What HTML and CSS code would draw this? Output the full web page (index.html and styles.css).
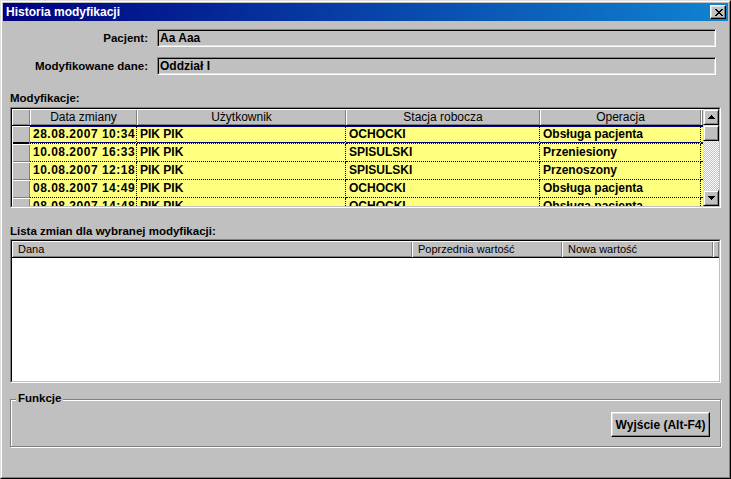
FILE: index.html
```html
<!DOCTYPE html>
<html lang="pl">
<head>
<meta charset="utf-8">
<title>Historia modyfikacji</title>
<link rel="stylesheet" href="styles.css">
</head>
<body>
<div class="window">
  <div class="frame">
    <div class="titlebar">
      <span class="title">Historia modyfikacji</span>
      <span class="close"><svg width="8" height="7" viewBox="0 0 8 7" shape-rendering="crispEdges"><path d="M0 0h2v1H0zM6 0h2v1H6zM1 1h2v1H1zM5 1h2v1H5zM2 2h4v1H2zM3 3h2v1H3zM2 4h4v1H2zM1 5h2v1H1zM5 5h2v1H5zM0 6h2v1H0zM6 6h2v1H6z" fill="#000"/></svg></span>
    </div>
    <div class="content">
      <div class="field"><span class="flabel">Pacjent:</span><div class="fbox">Aa Aaa</div></div>
      <div class="field"><span class="flabel">Modyfikowane dane:</span><div class="fbox">Oddział I</div></div>

      <div class="section-label">Modyfikacje:</div>
      <div class="sunken grid-wrap">
        <div class="sunken-in grid-in">
          <div class="grid">
            <div class="gh"></div><div class="gh">Data zmiany</div><div class="gh">Użytkownik</div><div class="gh">Stacja robocza</div><div class="gh">Operacja</div><div class="gh"></div>

            <div class="gi gi-sel"></div><div class="gc sel date">28.08.2007 10:34</div><div class="gc sel">PIK PIK</div><div class="gc sel">OCHOCKI</div><div class="gc sel">Obsługa pacjenta</div><div class="gf sel"></div>

            <div class="gi"></div><div class="gc date">10.08.2007 16:33</div><div class="gc">PIK PIK</div><div class="gc">SPISULSKI</div><div class="gc">Przeniesiony</div><div class="gf"></div>

            <div class="gi"></div><div class="gc date">10.08.2007 12:18</div><div class="gc">PIK PIK</div><div class="gc">SPISULSKI</div><div class="gc">Przenoszony</div><div class="gf"></div>

            <div class="gi"></div><div class="gc date">08.08.2007 14:49</div><div class="gc">PIK PIK</div><div class="gc">OCHOCKI</div><div class="gc">Obsługa pacjenta</div><div class="gf"></div>

            <div class="gi"></div><div class="gc date">08.08.2007 14:48</div><div class="gc">PIK PIK</div><div class="gc">OCHOCKI</div><div class="gc">Obsługa pacjenta</div><div class="gf"></div>
          </div>
          <div class="vscroll">
            <div class="sbtn"><svg width="7" height="4" viewBox="0 0 7 4" shape-rendering="crispEdges"><path d="M3 0h1v1H3zM2 1h3v1H2zM1 2h5v1H1zM0 3h7v1H0z" fill="#000"/></svg></div>
            <div class="sbtn"></div>
            <div class="track"></div>
            <div class="sbtn"><svg width="7" height="4" viewBox="0 0 7 4" shape-rendering="crispEdges"><path d="M0 0h7v1H0zM1 1h5v1H1zM2 2h3v1H2zM3 3h1v1H3z" fill="#000"/></svg></div>
          </div>
        </div>
      </div>

      <div class="section-label label2">Lista zmian dla wybranej modyfikacji:</div>
      <div class="sunken list-wrap">
        <div class="sunken-in list-in">
          <div class="lhead">
            <div class="lh lh-dana">Dana</div>
            <div class="lh lh-prev">Poprzednia wartość</div>
            <div class="lh lh-new">Nowa wartość</div>
            <div class="lh lh-fill"></div>
          </div>
          <div class="lbody"></div>
        </div>
      </div>

      <div class="group">
        <div class="group-title">Funkcje</div>
        <button class="btn" type="button">Wyjście (Alt-F4)</button>
      </div>
    </div>
  </div>
</div>
</body>
</html>
```
FILE: styles.css
```css
html, body {
  margin: 0;
  padding: 0;
  background: #c0c0c0;
  font-family: "Liberation Sans", Arial, sans-serif;
  color: #000;
}

.window {
  width: 731px;
  height: 479px;
  box-sizing: border-box;
  border: 1px solid;
  border-color: #dfdfdf #000 #000 #dfdfdf;
}

.frame {
  height: 100%;
  box-sizing: border-box;
  border: 1px solid;
  border-color: #fff #808080 #808080 #fff;
  padding: 1px;
  display: flex;
  flex-direction: column;
  background: #c0c0c0;
}

.titlebar {
  height: 18px;
  flex: none;
  background: linear-gradient(90deg, #000080 0%, #1084d0 100%);
  display: flex;
  align-items: center;
  justify-content: space-between;
  padding: 0 2px 0 3px;
}

.title {
  color: #fff;
  font-weight: bold;
  font-size: 12px;
  line-height: 18px;
  white-space: nowrap;
}

.close {
  width: 16px;
  height: 14px;
  box-sizing: border-box;
  background: #c0c0c0;
  border: 1px solid;
  border-color: #fff #000 #000 #fff;
  box-shadow: inset -1px -1px 0 #808080, inset 1px 1px 0 #dfdfdf;
  display: flex;
  align-items: center;
  justify-content: center;
  padding-left: 2px;
}

.close svg { display: block; }

.content {
  flex: 1;
  padding: 8px 7px 0 7px;
  display: flex;
  flex-direction: column;
}

.field {
  display: flex;
  align-items: center;
  height: 18px;
  margin-right: 5px;
}

.field + .field { margin-top: 10px; }

.flabel {
  width: 138px;
  margin-right: 9px;
  text-align: right;
  font-weight: bold;
  font-size: 11.5px;
  line-height: 18px;
  white-space: nowrap;
}

.fbox {
  flex: 1;
  height: 18px;
  box-sizing: border-box;
  border: 1px solid;
  border-color: #808080 #fff #fff #808080;
  box-shadow: inset 1px 1px 0 #000, inset -1px -1px 0 #dfdfdf;
  font-weight: bold;
  font-size: 12px;
  line-height: 16px;
  padding-left: 2px;
  white-space: nowrap;
}

.section-label {
  margin-top: 16px;
  font-weight: bold;
  font-size: 11.5px;
  line-height: 14px;
  white-space: nowrap;
}

.sunken {
  border: 1px solid;
  border-color: #808080 #fff #fff #808080;
}

.sunken-in {
  border: 1px solid;
  border-color: #000 #c0c0c0 #c0c0c0 #000;
}

.grid-wrap { margin-top: 2px; }

.grid-in {
  display: flex;
  height: 97px;
}

.grid {
  width: 691px;
  height: 97px;
  overflow: hidden;
  display: grid;
  grid-template-columns: 18px 107px 209px 194px 161px 2px;
  grid-template-rows: 17px;
  grid-auto-rows: 18px;
  background: #ffff80;
}

.gh {
  box-sizing: border-box;
  background: #c0c0c0;
  border-bottom: 1px solid #000;
  box-shadow: inset 1px 1px 0 #fff, inset -1px -1px 0 #808080;
  font-size: 12px;
  line-height: 16px;
  text-align: center;
  white-space: nowrap;
  overflow: hidden;
}

.gi {
  box-sizing: border-box;
  background: #c0c0c0;
  box-shadow: inset 1px 1px 0 #fff, inset -1px -1px 0 #808080;
}

.gi-sel {
  box-shadow: inset 1px 1px 0 #fff, inset -1px 0 0 #808080, inset 0 -2px 0 #000;
}

.gc {
  box-sizing: border-box;
  border-right: 1px dotted #000;
  border-bottom: 1px dotted #000;
  font-weight: bold;
  font-size: 12px;
  line-height: 17px;
  padding-left: 3px;
  white-space: nowrap;
  overflow: hidden;
}

.gf {
  box-sizing: border-box;
  border-bottom: 1px dotted #000;
}

.date { letter-spacing: 0.5px; }

.gc.sel, .gf.sel {
  border-bottom: 1px dotted #000080;
  background: linear-gradient(#fff, #fff) border-box bottom / 100% 1px no-repeat, #ffff80;
  box-shadow: inset 0 1px 0 #000080, inset 0 -1px 0 #000080;
}

.vscroll {
  width: 16px;
  height: 97px;
  display: flex;
  flex-direction: column;
  background: repeating-conic-gradient(#c0c0c0 0 25%, #fff 0 50%) 0 0 / 2px 2px;
}

.sbtn {
  flex: none;
  height: 16px;
  box-sizing: border-box;
  background: #c0c0c0;
  border: 1px solid;
  border-color: #dfdfdf #000 #000 #dfdfdf;
  box-shadow: inset 1px 1px 0 #fff, inset -1px -1px 0 #808080;
  display: flex;
  align-items: center;
  justify-content: center;
}

.sbtn svg { display: block; }

.track { flex: 1; }

.label2 { margin-top: 16px; }

.list-wrap { margin-top: 1px; }

.list-in {
  height: 140px;
  background: #fff;
  display: flex;
  flex-direction: column;
}

.lhead {
  display: flex;
  height: 17px;
  flex: none;
}

.lh {
  box-sizing: border-box;
  height: 17px;
  background: #c0c0c0;
  border-bottom: 1px solid #000;
  box-shadow: inset 1px 1px 0 #fff, inset -1px -1px 0 #808080;
  font-size: 11px;
  line-height: 16px;
  padding-left: 6px;
  white-space: nowrap;
  overflow: hidden;
}

.lh-dana { width: 400px; }
.lh-prev { width: 150px; }
.lh-new { width: 151px; }
.lh-fill { flex: 1; }

.lbody { flex: 1; }

.group {
  margin-top: 16px;
  border: 1px solid #808080;
  box-shadow: 1px 1px 0 #fff, inset 1px 1px 0 #fff;
  padding: 0 10px 9px 0;
  display: flex;
  flex-direction: column;
}

.group-title {
  align-self: flex-start;
  margin: -9px 0 0 5px;
  padding: 0 2px;
  background: #c0c0c0;
  font-weight: bold;
  font-size: 11.5px;
  line-height: 14px;
  white-space: nowrap;
}

.btn {
  align-self: flex-end;
  margin-top: 7px;
  width: 99px;
  height: 25px;
  box-sizing: border-box;
  padding: 0;
  background: #c0c0c0;
  border: 1px solid;
  border-color: #fff #000 #000 #fff;
  box-shadow: inset -1px -1px 0 #808080, inset 1px 1px 0 #dfdfdf;
  font-family: "Liberation Sans", Arial, sans-serif;
  font-weight: bold;
  font-size: 12px;
  color: #000;
  white-space: nowrap;
}
```
